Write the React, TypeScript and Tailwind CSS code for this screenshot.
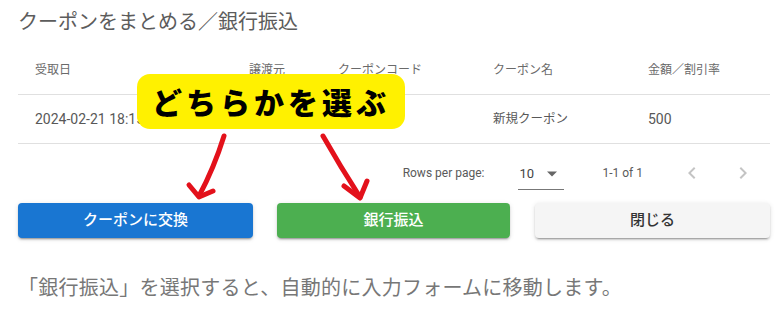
import React from 'react';

const jp = { fontFamily: 'Roboto, "Noto Sans CJK JP", sans-serif' };

const columns = [
  { label: '受取日', width: 'w-[214px]' },
  { label: '譲渡元', width: 'w-[89px]' },
  { label: 'クーポンコード', width: 'w-[155px]' },
  { label: 'クーポン名', width: 'w-[155px]' },
  { label: '金額／割引率', width: 'flex-1' },
];

const row = ['2024-02-21 18:15', '', '', '新規クーポン', '500'];

function ChevronLeft() {
  return (
    <svg width="24" height="24" viewBox="0 0 24 24" fill="#c4c4c4">
      <path d="M15.41 7.41 14 6l-6 6 6 6 1.41-1.41L10.83 12z" />
    </svg>
  );
}

function ChevronRight() {
  return (
    <svg width="24" height="24" viewBox="0 0 24 24" fill="#c4c4c4">
      <path d="M10 6 8.59 7.41 13.17 12l-4.58 4.59L10 18l6-6z" />
    </svg>
  );
}

const btnShadow =
  'shadow-[0_3px_1px_-2px_rgba(0,0,0,0.2),0_2px_2px_0_rgba(0,0,0,0.14),0_1px_5px_0_rgba(0,0,0,0.12)]';

export default function App() {
  return (
    <div className="relative w-[784px] h-[318px] overflow-hidden bg-white" style={jp}>
      <div className="pl-[18px] w-[770px]">
        {/* title */}
        <div className="pt-[8px] h-[46px] text-[20px] leading-[28px] text-[#5c5c5c]">
          クーポンをまとめる／銀行振込
        </div>

        {/* table */}
        <div className="flex h-[49px] items-center border-b border-[#e0e0e0] text-[12px] text-[#6a6a6a]">
          {columns.map((c) => (
            <div key={c.label} className={`${c.width} pl-[17px]`}>
              {c.label}
            </div>
          ))}
        </div>
        <div className="flex h-[49px] items-center border-b border-[#e0e0e0] text-[12.5px] text-[#585858]">
          {columns.map((c, i) => (
            <div
              key={c.label}
              className={`${c.width} pl-[17px] whitespace-nowrap ${i === 0 || i === 4 ? 'text-[14px]' : ''}`}
            >
              {row[i]}
            </div>
          ))}
        </div>

        {/* pagination */}
        <div className="flex h-[58px] items-center justify-end pr-[15px] text-[12px] text-[#5a5a5a]">
          <span>Rows per page:</span>
          <div className="ml-[34px] flex h-[34px] w-[46px] items-center border-b border-[#777] pt-[2px]">
            <span className="pl-[1px] text-[13px] text-[#444]">10</span>
            <svg className="ml-[13px]" width="10" height="6" viewBox="0 0 10 5" fill="#666">
              <path d="M0 0l5 5 5-5z" />
            </svg>
          </div>
          <span className="ml-[38px]">1-1 of 1</span>
          <span className="ml-[37px] flex">
            <ChevronLeft />
          </span>
          <span className="ml-[27px] flex">
            <ChevronRight />
          </span>
        </div>

        {/* buttons */}
        <div className="mt-[1px] flex gap-[24px]">
          <button className={`h-[35px] w-[235px] rounded-[4px] bg-[#1976d2] text-[15px] font-medium text-white ${btnShadow}`}>
            クーポンに交換
          </button>
          <button className={`h-[35px] w-[233px] rounded-[4px] bg-[#4caf50] text-[15px] font-medium text-white ${btnShadow}`}>
            銀行振込
          </button>
          <button className={`ml-[1px] h-[35px] w-[235px] rounded-[4px] bg-[#f5f5f5] text-[15px] font-medium text-[#333] ${btnShadow}`}>
            閉じる
          </button>
        </div>

        {/* note */}
        <p className="mt-[36px] text-[20px] leading-[28px] tracking-[0.25px] text-[#777] whitespace-nowrap">
          「銀行振込」を選択すると、自動的に入力フォームに移動します。
        </p>
      </div>

      {/* callout label */}
      <div
        className="absolute left-[137px] top-[74px] flex h-[55px] w-[268px] items-center justify-center rounded-[13px] bg-[#fff100] text-[30px] font-black tracking-[4px] text-black"
        style={{ fontFamily: '"Noto Sans CJK JP", sans-serif' }}
      >
        どちらかを選ぶ
      </div>

      {/* arrows */}
      <svg className="absolute left-0 top-0 pointer-events-none" width="784" height="318" viewBox="0 0 784 318">
        <g fill="none" stroke="#e3111b" strokeWidth="5" strokeLinecap="round" strokeLinejoin="round">
          <path d="M224 136 Q214 168 199 196" />
          <path d="M189 185 L199 197 L213 191" />
          <path d="M323 136 Q340 166 360 197" />
          <path d="M344 186 L360 198 L367 181" />
        </g>
      </svg>
    </div>
  );
}
